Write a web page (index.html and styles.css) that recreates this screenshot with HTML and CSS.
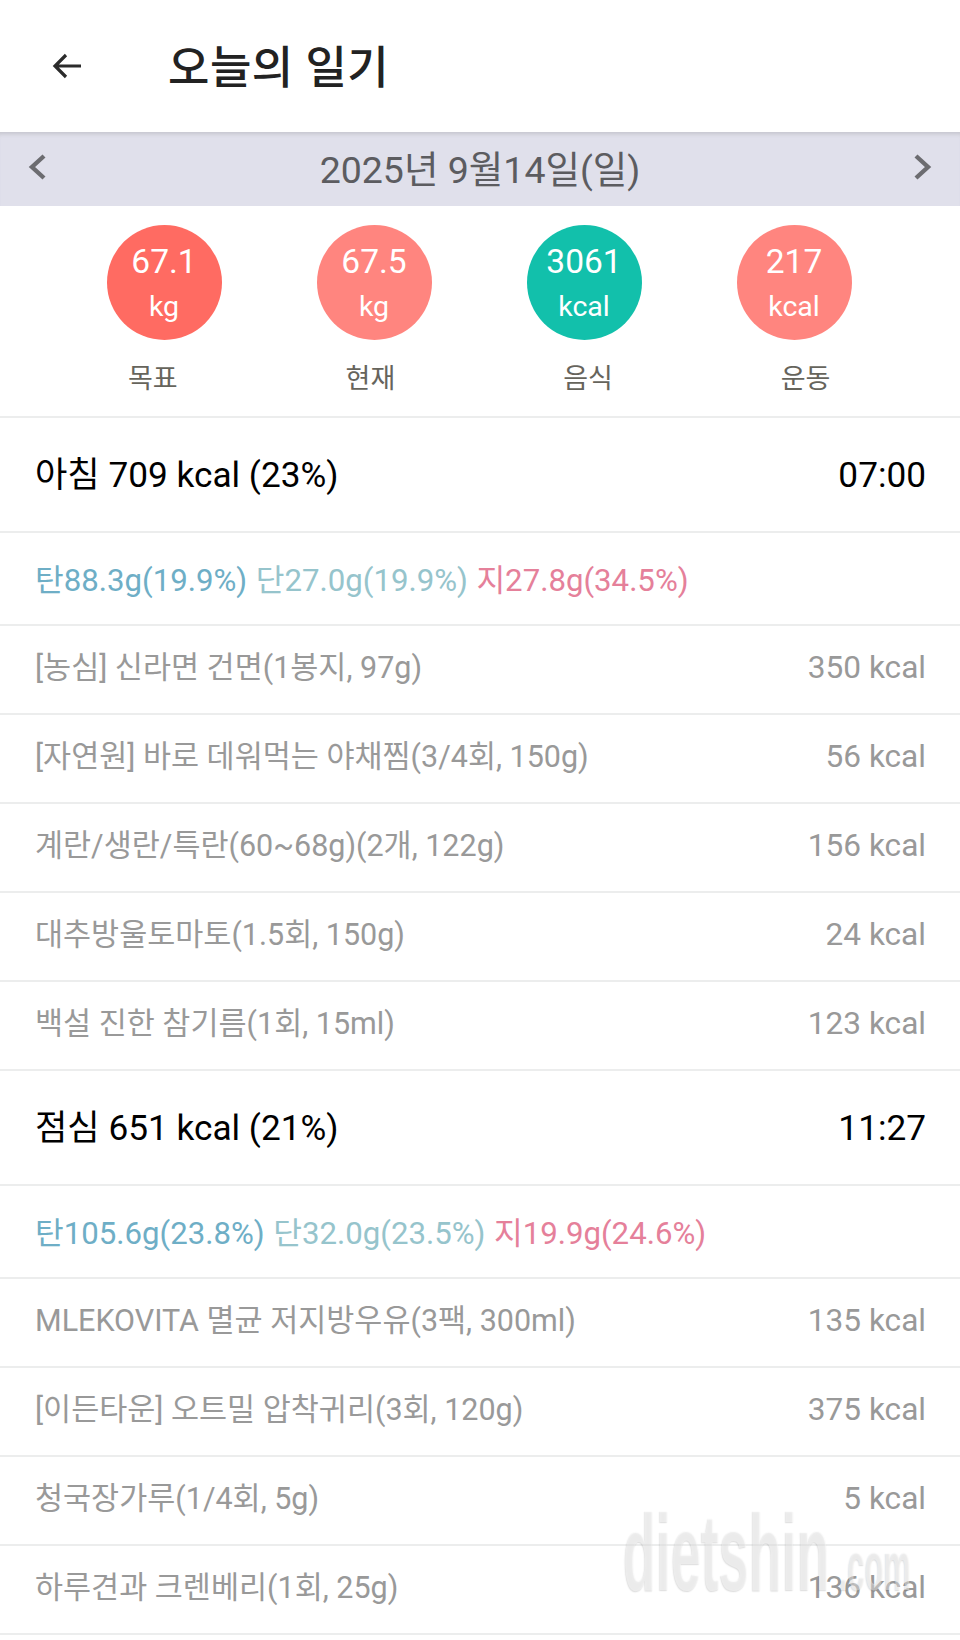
FILE: index.html
```html
<!DOCTYPE html>
<html lang="ko">
<head>
<meta charset="utf-8">
<title>오늘의 일기</title>
<link rel="stylesheet" href="styles.css">
</head>
<body>
<div class="page">
  <header class="appbar">
    <svg class="back" viewBox="0 0 30 26" width="30" height="26"><path d="M29 13H3M14 2 3 13l11 11" fill="none" stroke="#2b2b2b" stroke-width="3.2"/></svg>
    <h1 class="title">오늘의 일기</h1>
  </header>
  <nav class="datebar">
    <svg class="chev" viewBox="0 0 20 28" width="20" height="28"><path d="M17 3 5 14l12 11" fill="none" stroke="#6c6c70" stroke-width="4.4"/></svg>
    <span class="date">2025년 9월14일(일)</span>
    <svg class="chev" viewBox="0 0 20 28" width="20" height="28"><path d="M3 3l12 11L3 25" fill="none" stroke="#6c6c70" stroke-width="4.4"/></svg>
  </nav>
  <section class="summary">
    <div class="circles">
      <div class="circle red"><span class="val">67.1</span><span class="unit">kg</span></div>
      <div class="circle pink"><span class="val">67.5</span><span class="unit">kg</span></div>
      <div class="circle teal"><span class="val">3061</span><span class="unit">kcal</span></div>
      <div class="circle pink"><span class="val">217</span><span class="unit">kcal</span></div>
    </div>
    <div class="labels"><span>목표</span><span>현재</span><span>음식</span><span>운동</span></div>
  </section>
  <div class="meal"><span>아침 709 kcal (23%)</span><span>07:00</span></div>
  <div class="macro"><span class="carb">탄88.3g(19.9%)</span> <span class="prot">단27.0g(19.9%)</span> <span class="fat">지27.8g(34.5%)</span></div>
  <div class="item"><span>[농심] 신라면 건면(1봉지, 97g)</span><span class="kcal">350 kcal</span></div>
  <div class="item"><span>[자연원] 바로 데워먹는 야채찜(3/4회, 150g)</span><span class="kcal">56 kcal</span></div>
  <div class="item"><span>계란/생란/특란(60~68g)(2개, 122g)</span><span class="kcal">156 kcal</span></div>
  <div class="item"><span>대추방울토마토(1.5회, 150g)</span><span class="kcal">24 kcal</span></div>
  <div class="item"><span>백설 진한 참기름(1회, 15ml)</span><span class="kcal">123 kcal</span></div>
  <div class="meal"><span>점심 651 kcal (21%)</span><span>11:27</span></div>
  <div class="macro"><span class="carb">탄105.6g(23.8%)</span> <span class="prot">단32.0g(23.5%)</span> <span class="fat">지19.9g(24.6%)</span></div>
  <div class="item"><span>MLEKOVITA 멸균 저지방우유(3팩, 300ml)</span><span class="kcal">135 kcal</span></div>
  <div class="item"><span>[이든타운] 오트밀 압착귀리(3회, 120g)</span><span class="kcal">375 kcal</span></div>
  <div class="item"><span>청국장가루(1/4회, 5g)</span><span class="kcal">5 kcal</span></div>
  <div class="item"><span>하루견과 크렌베리(1회, 25g)</span><span class="kcal">136 kcal</span></div>
  <div class="watermark"><span class="wm-main">dietshin</span><span class="wm-com">.com</span></div>
</div>
</body>
</html>
```
FILE: styles.css
```css
* { box-sizing: border-box; }
html, body { margin: 0; padding: 0; }
body {
  background: #fff;
  font-family: Roboto, "Noto Sans CJK KR", sans-serif;
}
.page {
  position: relative;
  width: 960px;
  height: 1640px;
  overflow: hidden;
}
.appbar {
  height: 132px;
  display: flex;
  align-items: center;
  padding-left: 52px;
}
.title {
  margin: 0 0 0 86px;
  padding-top: 4px;
  font-size: 45px;
  font-weight: 500;
  color: #222;
  line-height: 1;
  letter-spacing: 0.5px;
}
.datebar {
  height: 74px;
  background: #e0e0eb;
  box-shadow: inset 0 5px 4px -3px #c4c4cc;
  display: flex;
  align-items: center;
  justify-content: space-between;
  padding: 0 27px 5px 27px;
}
.date {
  font-size: 37.5px;
  color: #5c5c60;
  line-height: 1;
  padding-top: 8px;
}
.summary {
  height: 212px;
  border-bottom: 2px solid #eceded;
  padding-top: 19px;
}
.circles {
  display: grid;
  grid-template-columns: repeat(4, 210px);
  padding-left: 59px;
}
.circle {
  justify-self: center;
  width: 115px;
  height: 115px;
  border-radius: 50%;
  color: #fff;
  display: flex;
  flex-direction: column;
  align-items: center;
  padding-top: 18px;
}
.red { background: #ff6b62; }
.pink { background: #ff857f; }
.teal { background: #12c0ab; }
.val { font-size: 33.5px; line-height: 38px; }
.unit { font-size: 28.5px; line-height: 32px; margin-top: 10px; }
.labels {
  display: grid;
  grid-template-columns: repeat(4, 217.6px);
  padding-left: 44px;
  margin-top: 20px;
  text-align: center;
  font-size: 27px;
  line-height: 38px;
  color: #66645c;
}
.meal {
  height: 115px;
  display: flex;
  justify-content: space-between;
  align-items: baseline;
  padding: 35px 34px 0 35px;
  font-size: 35.2px;
  line-height: 44px;
  color: #000;
  border-bottom: 2px solid #eceded;
}
.macro {
  height: 93px;
  display: flex;
  align-items: center;
  gap: 8.5px;
  padding: 0 35px 2px;
  font-size: 31.2px;
  border-bottom: 2px solid #eceded;
}
.carb { color: #6eaec6; }
.prot { color: #96c4cc; }
.fat { color: #e5809a; }
.item {
  height: 89px;
  display: flex;
  justify-content: space-between;
  align-items: baseline;
  padding: 22px 34px 0 35px;
  font-size: 30.5px;
  line-height: 40px;
  color: #999;
  border-bottom: 2px solid #eceded;
}
.kcal { font-size: 31.6px; }
.watermark {
  position: absolute;
  left: 623px;
  top: 1497px;
  display: flex;
  align-items: baseline;
  font-family: "Liberation Sans", sans-serif;
  font-weight: 700;
  color: rgba(255, 255, 255, 0.45);
  text-shadow: -1px 1px 2px rgba(0, 0, 0, 0.14);
  pointer-events: none;
  line-height: 1;
}
.wm-main {
  display: inline-block;
  width: 207px;
  font-size: 110px;
  white-space: nowrap;
  transform: scaleX(0.49);
  transform-origin: left bottom;
}
.wm-com {
  display: inline-block;
  width: 80px;
  margin-left: 9px;
  font-size: 70px;
  white-space: nowrap;
  transform: scaleX(0.44);
  transform-origin: left bottom;
}
```
